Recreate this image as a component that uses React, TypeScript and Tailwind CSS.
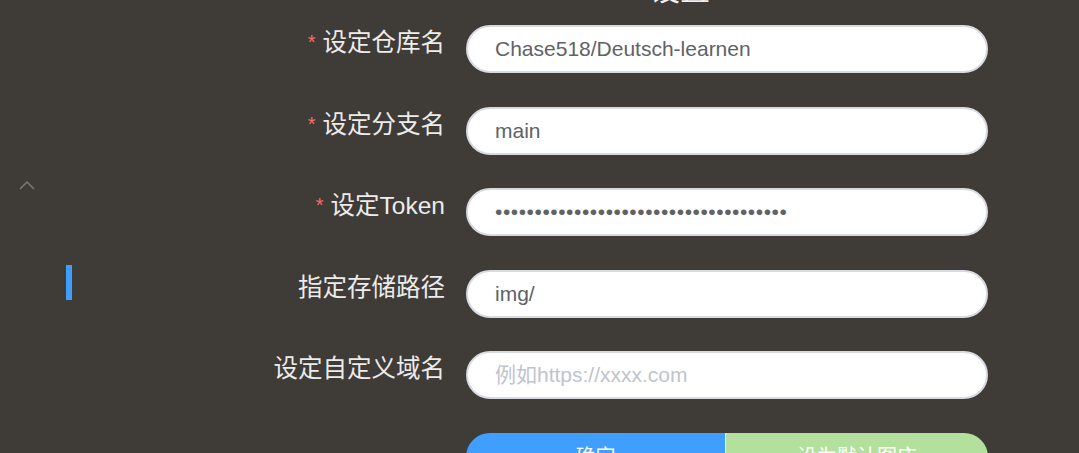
import React from "react";

const fields = [
  { label: "设定仓库名", required: true, value: "Chase518/Deutsch-learnen" },
  { label: "设定分支名", required: true, value: "main" },
  { label: "设定Token", required: true, value: "x".repeat(37), password: true },
  { label: "指定存储路径", required: false, value: "img/" },
  { label: "设定自定义域名", required: false, value: "", placeholder: "例如https://xxxx.com" },
];

export default function App() {
  return (
    <div
      className="h-[453px] w-[1079px] overflow-hidden bg-[#3f3b37] flex"
      style={{ fontFamily: '"Liberation Sans", "Noto Sans CJK SC", sans-serif' }}
    >
      <div className="w-[245px] shrink-0 flex flex-col">
        <svg className="mt-[180px] ml-[19px]" width="16" height="10" viewBox="0 0 16 10">
          <polyline points="1,9 8,2 15,9" fill="none" stroke="#7c7a77" strokeWidth="1.5" />
        </svg>
        <div className="mt-[75px] ml-[66px] w-[6px] h-[35px] bg-[#409eff]" />
      </div>

      <div className="flex flex-col">
        <div className="-mt-[25px] h-[25px] leading-[30px] text-[30px] text-[#f0f0f0] ml-[405px] overflow-visible">
          设置
        </div>
        <div className="flex flex-col gap-[33.6px] mt-[25px]">
          {fields.map((f) => (
            <div key={f.label} className="flex gap-[21px] h-[48px]">
              <div className="w-[200px] text-right leading-[36px] text-[#ececec] text-[24.5px] flex justify-end items-center self-start h-[36px]">
                {f.required && <span className="text-[#f56c6c] text-[20px] mr-[7px] leading-none mt-[-2px]">*</span>}
                <span>{f.label}</span>
              </div>
              <input
                type={f.password ? "password" : "text"}
                readOnly
                value={f.value}
                placeholder={f.placeholder}
                className={
                  "w-[522px] h-[48px] rounded-full bg-white border-2 border-[#d8dae2] px-[27px] text-[21px] text-[#606266] placeholder:text-[#c0c4cc] outline-none" +
                  (f.password ? " tracking-[0.55px]" : "")
                }
                style={{ fontFamily: '"Liberation Sans", "Noto Sans CJK SC", sans-serif' }}
              />
            </div>
          ))}
          <div className="flex gap-[21px]">
            <div className="w-[200px]" />
            <div className="flex w-[522px] h-[48px] rounded-full overflow-hidden">
              <button className="w-[260px] bg-[#409eff] text-white text-[20px] border-r border-[#e6f0fa]">确定</button>
              <button className="flex-1 bg-[#b3e19d] text-white text-[20px]">设为默认图床</button>
            </div>
          </div>
        </div>
      </div>
    </div>
  );
}
